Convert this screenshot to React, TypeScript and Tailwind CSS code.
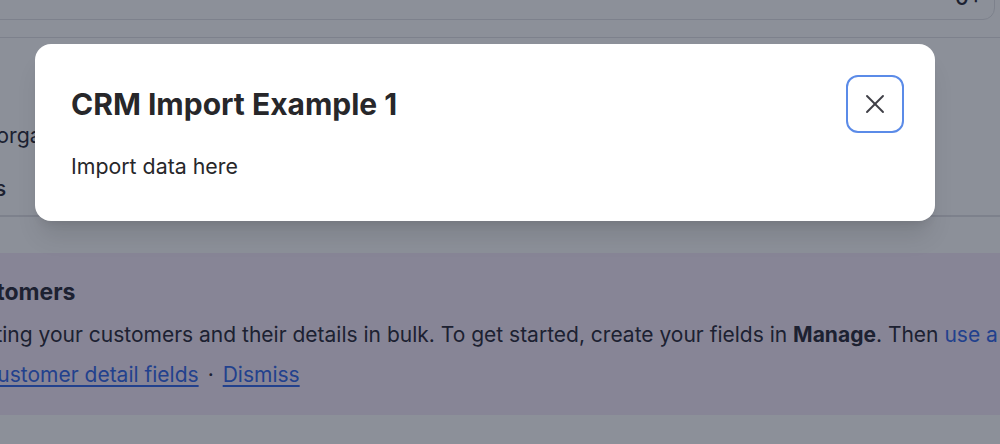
import { X } from "lucide-react"

export default function App() {
  return (
    <div className="relative h-[444px] w-[1000px] overflow-hidden bg-white font-['Inter',sans-serif] text-[#2b2b38]">
      {/* Page behind the dialog */}
      <div className="flex h-[38px] flex-col border-b border-[#e2e3e6]">
        <div className="-ml-[20px] -mt-[21px] mr-[5px] flex h-[41px] items-end justify-end rounded-xl border border-[#e2e3e6] pr-[11px]">
          <span className="mb-[6px] text-[21.33px] leading-[32px] font-medium">0+</span>
        </div>
      </div>

      <div className="h-[179px] border-b-2 border-[#e2e3e6] pt-[83px] whitespace-nowrap">
        <p className="-ml-[56px] text-[21.33px] leading-7">Your organisation</p>
        <p className="-ml-[77px] mt-[25px] text-[21.33px] leading-7 font-medium">Settings</p>
      </div>

      <div className="mt-[36px] h-[162px] bg-[#f6eafa] pt-[23px] whitespace-nowrap">
        <h3 className="-ml-[48px] text-[23px] leading-8 font-bold">Customers</h3>
        <p className="-ml-[115px] mt-[11px] text-[21px] leading-8">
          Start importing your customers and their details in bulk. To get started, create your fields in{" "}
          <span className="font-bold">Manage</span>. Then <a className="text-[#3468e8]">use a template</a>
        </p>
        <p className="-ml-[18px] mt-[8px] text-[21px] leading-8 text-[#3468e8]">
          <a className="underline underline-offset-[3px]">Customer detail fields</a>
          <span className="mx-[9px] text-[#2b2b38]">·</span>
          <a className="underline underline-offset-[3px]">Dismiss</a>
        </p>
      </div>

      {/* Overlay */}
      <div className="absolute inset-0 bg-[#0f172a]/[0.48]" />

      {/* Dialog */}
      <div className="absolute left-[35px] top-[44px] w-[900px] rounded-2xl bg-white px-9 pt-[31px] pb-[41px] shadow-xl">
        <div className="flex items-center justify-between">
          <h2 className="text-[30px] leading-9 font-bold text-[#27272a]">CRM Import Example 1</h2>
          <button className="-mr-[5px] flex size-[58px] items-center justify-center rounded-xl border-[2.5px] border-[#5b8be8] text-[#3f3f46]">
            <X className="size-8" strokeWidth={1.4} />
          </button>
        </div>
        <p className="mt-[19px] text-[21.33px] leading-7 text-[#27272a]">Import data here</p>
      </div>
    </div>
  )
}
